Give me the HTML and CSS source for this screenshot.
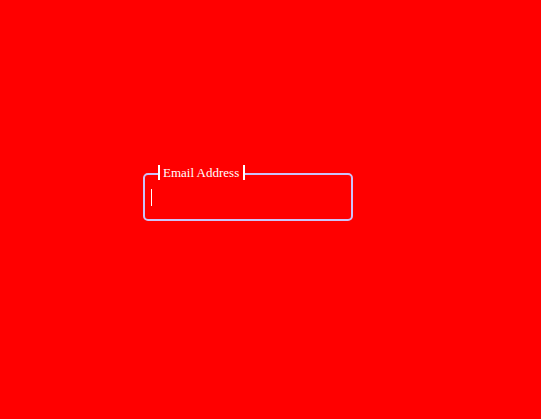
FILE: index.html
```html
<!DOCTYPE html>
<html lang="en">
<head>
<meta charset="utf-8">
<title>Email Address</title>
<link rel="stylesheet" href="styles.css">
</head>
<body>
<div class="page">
  <div class="field">
    <span class="legend">Email Address</span>
    <div class="input"><span class="caret"></span></div>
  </div>
</div>
</body>
</html>
```

FILE: styles.css
```css
html, body {
  margin: 0;
  background: #ff0000;
}
.page {
  padding: 173px 0 0 143px;
}
.field {
  position: relative;
  width: 206px;
  height: 44px;
  border: 2px solid #ccc2f8;
  border-radius: 5px;
}
.legend {
  position: absolute;
  left: 13px;
  top: -10px;
  height: 15px;
  line-height: 15px;
  padding: 0 4px 0 3px;
  border-left: 2px solid #ffffff;
  border-right: 2px solid #ffffff;
  background: #ff0000;
  color: #ffffff;
  font-family: "Liberation Serif", "Times New Roman", serif;
  font-size: 13px;
  white-space: nowrap;
}
.input {
  padding: 14px 0 0 6px;
}
.caret {
  display: block;
  width: 1px;
  height: 17px;
  background: #ffffff;
}
```
